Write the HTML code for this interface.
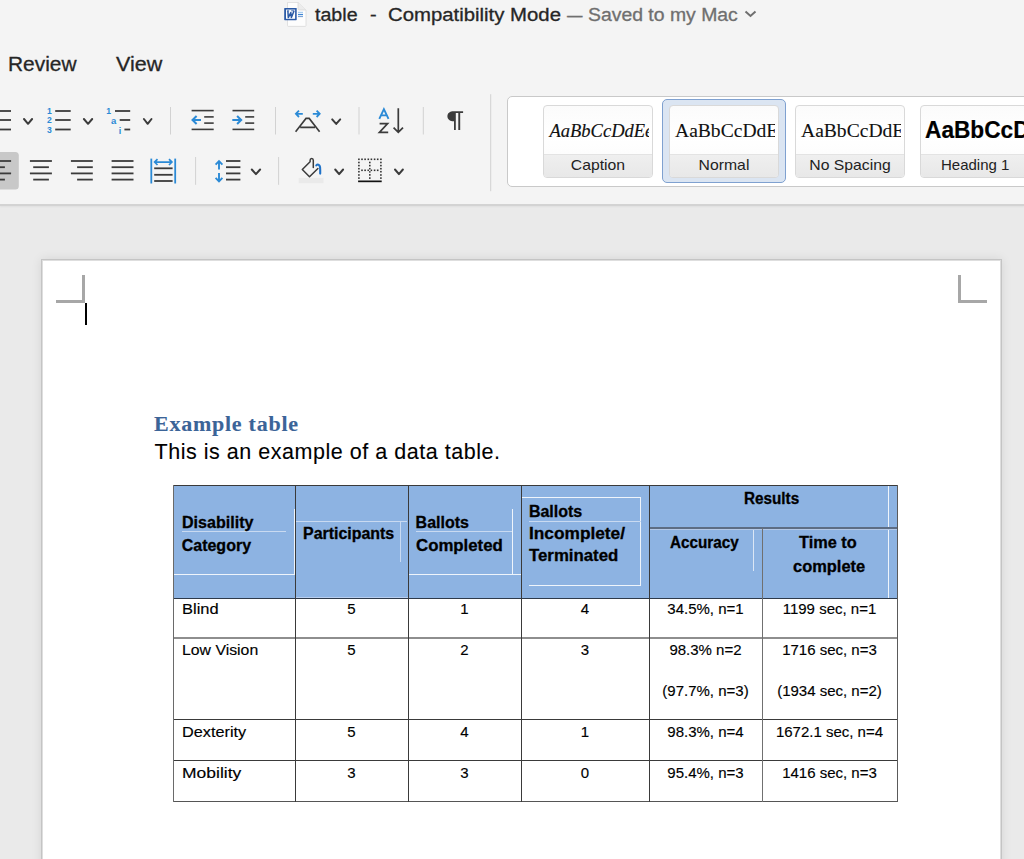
<!DOCTYPE html>
<html><head><meta charset="utf-8">
<style>
*{margin:0;padding:0;box-sizing:border-box}
html,body{width:1024px;height:859px;overflow:hidden;background:#eaeaea;font-family:"Liberation Sans",sans-serif}
.a{position:absolute}
.t{position:absolute;white-space:nowrap;line-height:1;-webkit-text-stroke:0.1px currentColor}
#top{position:absolute;left:0;top:0;width:1024px;height:205px;background:#f4f4f4}
#topline{position:absolute;left:0;top:204px;width:1024px;height:2px;background:#d3d3d3;box-shadow:0 1px 2px rgba(0,0,0,0.05)}
.sep{position:absolute;width:1px;background:#d3d3d3}
.ln{position:absolute;height:2px;background:#3c3c3c}
.bl{background:#2b8ad8}
.chev{position:absolute;width:10px;height:7px}
.tile{position:absolute;top:105px;height:73px;border:1px solid #d9d9d9;border-radius:4px;overflow:hidden;background:linear-gradient(#fbfbfb,#ffffff 40%,#fafafa)}
.tile .bot{position:absolute;left:0;right:0;top:48px;bottom:0;background:linear-gradient(#efefef,#e8e8e8);border-top:1px solid #e3e3e3}
.tile .lab{position:absolute;left:0;right:0;top:49.5px;text-align:center;font-size:15px;color:#222;line-height:18px;transform:scaleX(1.05)}
#page{position:absolute;left:41px;top:259px;width:961px;height:640px;background:#fff;border:1px solid #c4c4c4;box-shadow:0 0 10px rgba(0,0,0,0.09),inset 0 0 0 1px #dedede}
.cm{position:absolute;background:#a7a7a7}
.hl{position:absolute;background:#2a2a2a}
.wl{position:absolute;background:rgba(235,242,252,0.85)}
.hd{position:absolute;font-weight:bold;font-size:16px;color:#000;line-height:23px;white-space:nowrap}
.dt{position:absolute;font-size:15px;color:#000;line-height:20px;white-space:nowrap}
</style></head><body>
<div id="top"></div>
<div id="topline"></div>

<!-- title bar -->
<svg class="a" style="left:276px;top:2px" width="40" height="28" viewBox="0 0 40 28">
<path d="M11.5 0.4 H22 L30 8 V23.6 Q30 24.4 29.2 24.4 H12.3 Q11.5 24.4 11.5 23.6 Z" fill="#fdfdfd" stroke="#d9d9d9" stroke-width="0.8"/>
<path d="M22 0.4 V6.8 Q22 8 23.2 8 H30" fill="#ececec" stroke="#d9d9d9" stroke-width="0.8"/>
<rect x="8.2" y="5.9" width="12.5" height="12.3" rx="0.6" fill="#2b5aa6"/>
<rect x="10" y="7.6" width="9.1" height="9.2" fill="#fff"/>
<path d="M10.9 8.8 H13.2 M15.2 8.8 H18.4" stroke="#2b5aa6" stroke-width="0.9"/>
<path d="M11.9 9 L12.3 15.6 L14.8 10.5 L15.4 15.6 L18 9" fill="none" stroke="#2b5aa6" stroke-width="1.5" stroke-linejoin="round"/>
<rect x="22" y="9.8" width="5" height="1.2" fill="#a9cdf0"/>
<rect x="22" y="11.9" width="5" height="1.2" fill="#3f86d6"/>
<rect x="22" y="13.9" width="5" height="1.2" fill="#7aa3d6"/>
</svg>
<div class="t" style="-webkit-text-stroke:0.3px currentColor;left:314.5px;top:5.5px;font-size:18px;color:#262626;transform:scaleX(1.09);transform-origin:0 0">table</div>
<div class="t" style="-webkit-text-stroke:0.3px currentColor;left:370px;top:5.5px;font-size:18px;color:#262626;transform:scaleX(1.1);transform-origin:0 0">-</div>
<div class="t" style="-webkit-text-stroke:0.3px currentColor;left:388px;top:5.5px;font-size:18px;color:#262626;transform:scaleX(1.13);transform-origin:0 0">Compatibility Mode</div>
<div class="t" style="-webkit-text-stroke:0.3px currentColor;left:566.5px;top:5.5px;font-size:18px;color:#6f6f6f;transform:scaleX(0.86);transform-origin:0 0">—</div>
<div class="t" style="-webkit-text-stroke:0.3px currentColor;left:587.5px;top:5.5px;font-size:18px;color:#6f6f6f;transform:scaleX(1.077);transform-origin:0 0">Saved to my Mac</div>
<svg class="a" style="left:744px;top:10px" width="13" height="8"><path d="M1.5 1.5 L6.5 6 L11.5 1.5" fill="none" stroke="#6f6f6f" stroke-width="2"/></svg>

<!-- tabs -->
<div class="t" style="-webkit-text-stroke:0.3px currentColor;left:8.3px;top:53.6px;font-size:20.7px;color:#262626;transform:scaleX(1.01);transform-origin:0 0">Review</div>
<div class="t" style="-webkit-text-stroke:0.3px currentColor;left:115.5px;top:53.6px;font-size:20.7px;color:#262626;transform:scaleX(1.04);transform-origin:0 0">View</div>

<!-- ribbon row 1 -->
<svg class="a" id="rib" style="left:0;top:0" width="500" height="205" viewBox="0 0 500 205"><line x1="0" y1="111" x2="11" y2="111" stroke="#3b3b3b" stroke-width="1.8"/><line x1="0" y1="120" x2="11" y2="120" stroke="#3b3b3b" stroke-width="1.8"/><line x1="0" y1="129.5" x2="11" y2="129.5" stroke="#3b3b3b" stroke-width="1.8"/><path d="M24.0 119.0 L28.049999999999997 123.8 L32.1 119.0" fill="none" stroke="#3b3b3b" stroke-width="2" stroke-linecap="round" stroke-linejoin="round"/><line x1="55.2" y1="111" x2="70.7" y2="111" stroke="#3b3b3b" stroke-width="1.8"/><text x="49.3" y="114.1" font-size="8.6" font-weight="bold" fill="#2b8ad6" text-anchor="middle" font-family="Liberation Sans">1</text><line x1="55.2" y1="120" x2="70.7" y2="120" stroke="#3b3b3b" stroke-width="1.8"/><text x="49.3" y="123.1" font-size="8.6" font-weight="bold" fill="#2b8ad6" text-anchor="middle" font-family="Liberation Sans">2</text><line x1="55.2" y1="129.5" x2="70.7" y2="129.5" stroke="#3b3b3b" stroke-width="1.8"/><text x="49.3" y="132.6" font-size="8.6" font-weight="bold" fill="#2b8ad6" text-anchor="middle" font-family="Liberation Sans">3</text><path d="M83.89999999999999 119.0 L88.05 123.8 L92.2 119.0" fill="none" stroke="#3b3b3b" stroke-width="2" stroke-linecap="round" stroke-linejoin="round"/><line x1="115" y1="111" x2="130.2" y2="111" stroke="#3b3b3b" stroke-width="1.8"/><line x1="119.7" y1="120" x2="130.2" y2="120" stroke="#3b3b3b" stroke-width="1.8"/><line x1="124.4" y1="129.5" x2="130.2" y2="129.5" stroke="#3b3b3b" stroke-width="1.8"/><text x="108.7" y="114.1" font-size="8.6" font-weight="bold" fill="#2b8ad6" text-anchor="middle" font-family="Liberation Sans">1</text><text x="113.6" y="123.6" font-size="9.5" font-weight="bold" fill="#2b8ad6" text-anchor="middle" font-family="Liberation Sans">a</text><text x="119.9" y="133.5" font-size="9" font-weight="bold" fill="#2b8ad6" text-anchor="middle" font-family="Liberation Sans">i</text><path d="M143.9 119.0 L147.7 123.8 L151.5 119.0" fill="none" stroke="#3b3b3b" stroke-width="2" stroke-linecap="round" stroke-linejoin="round"/><rect x="170.0" y="107" width="1" height="27.5" fill="#d2d2d2"/><line x1="191.6" y1="110.6" x2="213.7" y2="110.6" stroke="#3b3b3b" stroke-width="1.6"/><line x1="191.6" y1="129.4" x2="213.7" y2="129.4" stroke="#3b3b3b" stroke-width="1.6"/><line x1="204.2" y1="116.9" x2="213.7" y2="116.9" stroke="#3b3b3b" stroke-width="1.6"/><line x1="204.2" y1="123.1" x2="213.7" y2="123.1" stroke="#3b3b3b" stroke-width="1.6"/><path d="M192.3 120 H201" stroke="#2b8ad6" stroke-width="2" fill="none"/><path d="M196.6 116 L192.5 120 L196.6 124" stroke="#2b8ad6" stroke-width="2" fill="none"/><line x1="232.5" y1="110.6" x2="254.2" y2="110.6" stroke="#3b3b3b" stroke-width="1.6"/><line x1="232.5" y1="129.4" x2="254.2" y2="129.4" stroke="#3b3b3b" stroke-width="1.6"/><line x1="245.2" y1="116.9" x2="254.2" y2="116.9" stroke="#3b3b3b" stroke-width="1.6"/><line x1="245.2" y1="123.1" x2="254.2" y2="123.1" stroke="#3b3b3b" stroke-width="1.6"/><path d="M232.3 120 H241" stroke="#2b8ad6" stroke-width="2" fill="none"/><path d="M237.1 116 L241.2 120 L237.1 124" stroke="#2b8ad6" stroke-width="2" fill="none"/><rect x="275.0" y="107" width="1" height="27.5" fill="#d2d2d2"/><path d="M295.6 131.8 L306 118.4 H309.2 L319.6 131.8 M300.2 127.4 H315" stroke="#3b3b3b" stroke-width="1.6" fill="none"/><path d="M296 113.8 H302.8 M299 110.6 L295.9 113.8 L299 117" stroke="#2b8ad6" stroke-width="1.8" fill="none"/><path d="M312.8 113.8 H319.6 M316.6 110.6 L319.7 113.8 L316.6 117" stroke="#2b8ad6" stroke-width="1.8" fill="none"/><path d="M332.2 119.39999999999999 L336.2 123.9 L340.2 119.39999999999999" fill="none" stroke="#3b3b3b" stroke-width="2" stroke-linecap="round" stroke-linejoin="round"/><rect x="358.5" y="107" width="1" height="27.5" fill="#d2d2d2"/><path d="M379.3 118.8 L383.9 109.2 L388.5 118.8 M381 115.4 H386.8" stroke="#2b8ad6" stroke-width="1.9" fill="none"/><path d="M379.6 123.6 H387.6 L379.4 132.4 H388.2" stroke="#3b3b3b" stroke-width="1.7" fill="none"/><path d="M398.3 108.3 V132.5 M393.6 127.6 L398.3 132.4 L403 127.6" stroke="#3b3b3b" stroke-width="1.7" fill="none"/><rect x="422.8" y="107" width="1" height="27.5" fill="#d2d2d2"/><path d="M454 111.3 H463.1 V113 H460.2 V130 H458.3 V113 H455.8 V130 H454 V121.3 C449.5 121.3 447.4 119.2 447.4 116.3 C447.4 113.3 449.6 111.3 454 111.3 Z" fill="#3b3b3b"/><rect x="490.2" y="94.2" width="1" height="96.99999999999999" fill="#d2d2d2"/><rect x="-4" y="152.1" width="22.8" height="37.5" rx="3.5" fill="#c8c8c8"/><line x1="0" y1="161" x2="11.1" y2="161" stroke="#3b3b3b" stroke-width="1.8"/><line x1="29.9" y1="161" x2="51.9" y2="161" stroke="#3b3b3b" stroke-width="1.8"/><line x1="70.9" y1="161" x2="92.8" y2="161" stroke="#3b3b3b" stroke-width="1.8"/><line x1="111.6" y1="161" x2="133.5" y2="161" stroke="#3b3b3b" stroke-width="1.8"/><line x1="0" y1="167.2" x2="4.9" y2="167.2" stroke="#3b3b3b" stroke-width="1.8"/><line x1="33.2" y1="167.2" x2="48.9" y2="167.2" stroke="#3b3b3b" stroke-width="1.8"/><line x1="77.1" y1="167.2" x2="92.8" y2="167.2" stroke="#3b3b3b" stroke-width="1.8"/><line x1="111.6" y1="167.2" x2="133.5" y2="167.2" stroke="#3b3b3b" stroke-width="1.8"/><line x1="0" y1="173.4" x2="11.1" y2="173.4" stroke="#3b3b3b" stroke-width="1.8"/><line x1="29.9" y1="173.4" x2="51.9" y2="173.4" stroke="#3b3b3b" stroke-width="1.8"/><line x1="70.9" y1="173.4" x2="92.8" y2="173.4" stroke="#3b3b3b" stroke-width="1.8"/><line x1="111.6" y1="173.4" x2="133.5" y2="173.4" stroke="#3b3b3b" stroke-width="1.8"/><line x1="0" y1="179.6" x2="4.9" y2="179.6" stroke="#3b3b3b" stroke-width="1.8"/><line x1="33.2" y1="179.6" x2="48.9" y2="179.6" stroke="#3b3b3b" stroke-width="1.8"/><line x1="77.1" y1="179.6" x2="92.8" y2="179.6" stroke="#3b3b3b" stroke-width="1.8"/><line x1="111.6" y1="179.6" x2="133.5" y2="179.6" stroke="#3b3b3b" stroke-width="1.8"/><line x1="151.3" y1="158.6" x2="151.3" y2="183.5" stroke="#2b8ad6" stroke-width="1.8"/><line x1="175.2" y1="158.6" x2="175.2" y2="183.5" stroke="#2b8ad6" stroke-width="1.8"/><path d="M154.5 162.1 H172 M157.5 159.2 L154.6 162.1 L157.5 165 M169 159.2 L171.9 162.1 L169 165" stroke="#2b8ad6" stroke-width="1.7" fill="none"/><line x1="154.2" y1="168.3" x2="172.6" y2="168.3" stroke="#3b3b3b" stroke-width="1.8"/><line x1="154.2" y1="174.8" x2="172.6" y2="174.8" stroke="#3b3b3b" stroke-width="1.8"/><line x1="154.2" y1="181" x2="172.6" y2="181" stroke="#3b3b3b" stroke-width="1.8"/><rect x="195.1" y="157" width="1" height="27.80000000000001" fill="#d2d2d2"/><path d="M219 169.6 V161.2 M215.6 164.6 L219 161.1 L222.4 164.6 M219 173 V181.2 M215.6 177.8 L219 181.3 L222.4 177.8" stroke="#2b8ad6" stroke-width="1.9" fill="none"/><line x1="226" y1="161" x2="240.4" y2="161" stroke="#3b3b3b" stroke-width="1.8"/><line x1="226" y1="167.2" x2="240.4" y2="167.2" stroke="#3b3b3b" stroke-width="1.8"/><line x1="226" y1="173.4" x2="240.4" y2="173.4" stroke="#3b3b3b" stroke-width="1.8"/><line x1="226" y1="179.6" x2="240.4" y2="179.6" stroke="#3b3b3b" stroke-width="1.8"/><path d="M251.8 169.5 L255.95 174.1 L260.09999999999997 169.5" fill="none" stroke="#3b3b3b" stroke-width="2" stroke-linecap="round" stroke-linejoin="round"/><rect x="278.1" y="157" width="1" height="27.80000000000001" fill="#d2d2d2"/><rect x="298.7" y="177.9" width="24.8" height="5.3" fill="#eaeaea"/><path d="M313.3 167.6 V160.3 Q313.3 158.5 311.7 158.5 Q310.1 158.5 310.1 160.3 V161.8 L302.3 169.5 L309.5 176.7 L317.9 168.5" stroke="#3b3b3b" stroke-width="1.5" fill="none" stroke-linejoin="round" stroke-linecap="round"/><path d="M316.3 165.4 Q317.9 163.4 319.5 165.6 Q320.4 167 320.2 170 V173.6" stroke="#1f72c8" stroke-width="2.1" fill="none" stroke-linecap="round"/><path d="M335.2 169.5 L339.15 174.1 L343.09999999999997 169.5" fill="none" stroke="#3b3b3b" stroke-width="2" stroke-linecap="round" stroke-linejoin="round"/><rect x="358.10" y="158.50" width="1.6" height="1.6" fill="#333"/><rect x="358.10" y="161.70" width="1.6" height="1.6" fill="#333"/><rect x="358.10" y="164.80" width="1.6" height="1.6" fill="#333"/><rect x="358.10" y="167.90" width="1.6" height="1.6" fill="#333"/><rect x="358.10" y="170.90" width="1.6" height="1.6" fill="#333"/><rect x="358.10" y="174.20" width="1.6" height="1.6" fill="#333"/><rect x="358.10" y="177.30" width="1.6" height="1.6" fill="#333"/><rect x="361.20" y="158.50" width="1.6" height="1.6" fill="#333"/><rect x="361.20" y="169.50" width="1.6" height="1.6" fill="#333"/><rect x="364.30" y="158.50" width="1.6" height="1.6" fill="#333"/><rect x="364.30" y="169.50" width="1.6" height="1.6" fill="#333"/><rect x="367.50" y="158.50" width="1.6" height="1.6" fill="#333"/><rect x="369.00" y="161.70" width="1.6" height="1.6" fill="#333"/><rect x="369.00" y="164.80" width="1.6" height="1.6" fill="#333"/><rect x="369.00" y="174.10" width="1.6" height="1.6" fill="#333"/><rect x="369.00" y="177.30" width="1.6" height="1.6" fill="#333"/><rect x="370.60" y="158.50" width="1.6" height="1.6" fill="#333"/><rect x="373.80" y="158.50" width="1.6" height="1.6" fill="#333"/><rect x="373.80" y="169.50" width="1.6" height="1.6" fill="#333"/><rect x="376.90" y="158.50" width="1.6" height="1.6" fill="#333"/><rect x="376.90" y="169.50" width="1.6" height="1.6" fill="#333"/><rect x="380.10" y="158.50" width="1.6" height="1.6" fill="#333"/><rect x="380.10" y="161.70" width="1.6" height="1.6" fill="#333"/><rect x="380.10" y="164.80" width="1.6" height="1.6" fill="#333"/><rect x="380.10" y="167.90" width="1.6" height="1.6" fill="#333"/><rect x="380.10" y="170.90" width="1.6" height="1.6" fill="#333"/><rect x="380.10" y="174.20" width="1.6" height="1.6" fill="#333"/><rect x="380.10" y="177.30" width="1.6" height="1.6" fill="#333"/><rect x="367.45" y="169.55" width="1.5" height="1.5" fill="#333"/><rect x="370.65" y="169.55" width="1.5" height="1.5" fill="#333"/><rect x="369.05" y="167.95" width="1.5" height="1.5" fill="#333"/><rect x="369.05" y="171.15" width="1.5" height="1.5" fill="#333"/><rect x="358.1" y="180.5" width="23.6" height="1.7" fill="#111"/><path d="M395.0 169.5 L398.95 174.1 L402.9 169.5" fill="none" stroke="#3b3b3b" stroke-width="2" stroke-linecap="round" stroke-linejoin="round"/></svg>

<!-- style gallery -->
<div class="a" style="left:507px;top:96px;width:530px;height:91px;background:#fff;border:1px solid #c9c9c9;border-radius:5px"></div>
<div class="tile" style="left:543px;width:110px"><div class="a" style="left:0;top:0;width:105px;height:45px;overflow:hidden"><div class="t" style="left:5.5px;top:16px;font-family:'Liberation Serif',serif;font-style:italic;font-size:18.5px;color:#111;-webkit-text-stroke:0.15px #111;transform:scaleX(1.0);transform-origin:0 0">AaBbCcDdEe</div></div><div class="bot"></div><div class="lab">Caption</div></div>
<div class="a" style="left:662px;top:99px;width:124px;height:84px;border:1.5px solid #7fa1d0;border-radius:5px;background:#dbe5f2"></div>
<div class="tile" style="left:669px;width:110px"><div class="a" style="left:0;top:0;width:104.5px;height:45px;overflow:hidden"><div class="t" style="left:4.5px;top:15.3px;font-family:'Liberation Serif',serif;font-size:19.3px;color:#111;-webkit-text-stroke:0.1px #111;transform:scaleX(1.015);transform-origin:0 0">AaBbCcDdE</div></div><div class="bot"></div><div class="lab">Normal</div></div>
<div class="tile" style="left:795px;width:110px"><div class="a" style="left:0;top:0;width:104.5px;height:45px;overflow:hidden"><div class="t" style="left:4.5px;top:15.3px;font-family:'Liberation Serif',serif;font-size:19.3px;color:#111;-webkit-text-stroke:0.1px #111;transform:scaleX(1.015);transform-origin:0 0">AaBbCcDdE</div></div><div class="bot"></div><div class="lab">No Spacing</div></div>
<div class="tile" style="left:920px;width:140px"><div class="t" style="left:3.5px;top:12px;font-weight:bold;font-size:24px;color:#000;-webkit-text-stroke:0.2px #000;transform:scaleX(0.945);transform-origin:0 0">AaBbCcDd</div><div class="bot"></div><div class="lab" style="left:0;right:auto;width:140px;padding-left:20px;text-align:left;transform:none">Heading 1</div></div>

<!-- page -->
<div id="page"></div>
<div class="cm" style="left:82px;top:275px;width:3px;height:28px"></div>
<div class="cm" style="left:56px;top:300px;width:29px;height:3px"></div>
<div class="cm" style="left:958px;top:275px;width:3px;height:28px"></div>
<div class="cm" style="left:958px;top:300px;width:29px;height:3px"></div>
<div class="a" style="left:85px;top:303px;width:1.6px;height:22px;background:#000"></div>

<div class="t" style="left:154px;top:413px;font-family:'Liberation Serif',serif;font-weight:bold;font-size:22px;letter-spacing:0.75px;color:#3b6498">Example table</div>
<div class="t" style="left:154.5px;top:442px;font-size:21.5px;letter-spacing:0.53px;color:#000">This is an example of a data table.</div>

<div id="tbl"><div class="a" style="left:173px;top:485px;width:724px;height:113px;background:#8db3e2"></div><div class="a" style="left:182px;top:531px;width:104px;height:1px;background:#c9daf1"></div><div class="a" style="left:173px;top:574px;width:121px;height:1px;background:#eef4fb"></div><div class="a" style="left:294px;top:509px;width:1px;height:66px;background:#eef4fb"></div><div class="a" style="left:296px;top:521px;width:111px;height:1px;background:#c9daf1"></div><div class="a" style="left:400px;top:521px;width:1px;height:41px;background:#c9daf1"></div><div class="a" style="left:296px;top:597px;width:112px;height:1px;background:#b9cff0"></div><div class="a" style="left:416px;top:531px;width:96px;height:1px;background:#c9daf1"></div><div class="a" style="left:409px;top:574px;width:112px;height:1px;background:#eef4fb"></div><div class="a" style="left:512px;top:509px;width:1px;height:66px;background:#eef4fb"></div><div class="a" style="left:522px;top:497px;width:119px;height:1px;background:#eef4fb"></div><div class="a" style="left:640px;top:497px;width:1px;height:89px;background:#eef4fb"></div><div class="a" style="left:529px;top:585px;width:112px;height:1px;background:#eef4fb"></div><div class="a" style="left:529px;top:521px;width:112px;height:1px;background:#c9daf1"></div><div class="a" style="left:888px;top:486px;width:1px;height:112px;background:#eef4fb"></div><div class="a" style="left:753px;top:529px;width:1px;height:42px;background:#dbe6f5"></div><div class="a" style="left:173px;top:485px;width:725px;height:1px;background:#3a3a3a"></div><div class="a" style="left:173px;top:598px;width:725px;height:1px;background:#2e3a4a"></div><div class="a" style="left:173px;top:637px;width:725px;height:2px;background:#8e8e8e"></div><div class="a" style="left:173px;top:719px;width:725px;height:1px;background:#3a3a3a"></div><div class="a" style="left:173px;top:760px;width:725px;height:1px;background:#3a3a3a"></div><div class="a" style="left:173px;top:801px;width:725px;height:1px;background:#555"></div><div class="a" style="left:649px;top:527px;width:248px;height:2px;background:#5d6d84"></div><div class="a" style="left:650px;top:529px;width:247px;height:1px;background:#b4c9e8"></div><div class="a" style="left:173px;top:485px;width:1px;height:317px;background:#6a6a6a"></div><div class="a" style="left:295px;top:485px;width:1px;height:317px;background:#3a3a3a"></div><div class="a" style="left:408px;top:485px;width:1px;height:317px;background:#3a3a3a"></div><div class="a" style="left:521px;top:485px;width:1px;height:317px;background:#3a3a3a"></div><div class="a" style="left:649px;top:485px;width:1px;height:317px;background:#3a3a3a"></div><div class="a" style="left:897px;top:485px;width:1px;height:317px;background:#5a5a5a"></div><div class="a" style="left:762px;top:528px;width:1px;height:274px;background:#707070"></div><div class="t" style="left:181.70px;top:515.06px;font-size:16px;font-weight:bold;-webkit-text-stroke:0.3px #000;color:#000;transform:scaleX(1.0042);transform-origin:0 0;">Disability</div><div class="t" style="left:181.70px;top:538.26px;font-size:16px;font-weight:bold;-webkit-text-stroke:0.3px #000;color:#000;">Category</div><div class="t" style="left:302.80px;top:525.76px;font-size:16px;font-weight:bold;-webkit-text-stroke:0.3px #000;color:#000;transform:scaleX(0.9961);transform-origin:0 0;">Participants</div><div class="t" style="left:415.60px;top:515.06px;font-size:16px;font-weight:bold;-webkit-text-stroke:0.3px #000;color:#000;">Ballots</div><div class="t" style="left:415.60px;top:538.26px;font-size:16px;font-weight:bold;-webkit-text-stroke:0.3px #000;color:#000;transform:scaleX(1.0500);transform-origin:0 0;">Completed</div><div class="t" style="left:528.90px;top:503.56px;font-size:16px;font-weight:bold;-webkit-text-stroke:0.3px #000;color:#000;">Ballots</div><div class="t" style="left:528.90px;top:526.06px;font-size:16px;font-weight:bold;-webkit-text-stroke:0.3px #000;color:#000;transform:scaleX(1.0800);transform-origin:0 0;">Incomplete/</div><div class="t" style="left:528.90px;top:548.46px;font-size:16px;font-weight:bold;-webkit-text-stroke:0.3px #000;color:#000;transform:scaleX(1.0500);transform-origin:0 0;">Terminated</div><div class="t" style="left:743.90px;top:491.36px;font-size:16px;font-weight:bold;-webkit-text-stroke:0.3px #000;color:#000;transform:scaleX(0.9543);transform-origin:0 0;">Results</div><div class="t" style="left:669.70px;top:535.16px;font-size:16px;font-weight:bold;-webkit-text-stroke:0.3px #000;color:#000;transform:scaleX(0.9541);transform-origin:0 0;">Accuracy</div><div class="t" style="left:799.00px;top:535.16px;font-size:16px;font-weight:bold;-webkit-text-stroke:0.3px #000;color:#000;transform:scaleX(1.0184);transform-origin:0 0;">Time to</div><div class="t" style="left:792.60px;top:559.46px;font-size:16px;font-weight:bold;-webkit-text-stroke:0.3px #000;color:#000;transform:scaleX(1.0271);transform-origin:0 0;">complete</div><div class="t" style="left:181.80px;top:601.30px;font-size:15px;-webkit-text-stroke:0.15px #000;color:#000;transform:scaleX(1.0970);transform-origin:0 0;">Blind</div><div class="t" style="left:347.33px;top:601.30px;font-size:15px;-webkit-text-stroke:0.15px #000;color:#000;">5</div><div class="t" style="left:460.33px;top:601.30px;font-size:15px;-webkit-text-stroke:0.15px #000;color:#000;">1</div><div class="t" style="left:580.83px;top:601.30px;font-size:15px;-webkit-text-stroke:0.15px #000;color:#000;">4</div><div class="t" style="left:667.33px;top:601.30px;font-size:15px;-webkit-text-stroke:0.15px #000;color:#000;">34.5%, n=1</div><div class="t" style="left:782.71px;top:601.30px;font-size:15px;-webkit-text-stroke:0.15px #000;color:#000;">1199 sec, n=1</div><div class="t" style="left:181.80px;top:641.90px;font-size:15px;-webkit-text-stroke:0.15px #000;color:#000;transform:scaleX(1.0540);transform-origin:0 0;">Low Vision</div><div class="t" style="left:347.33px;top:641.90px;font-size:15px;-webkit-text-stroke:0.15px #000;color:#000;">5</div><div class="t" style="left:460.33px;top:641.90px;font-size:15px;-webkit-text-stroke:0.15px #000;color:#000;">2</div><div class="t" style="left:580.83px;top:641.90px;font-size:15px;-webkit-text-stroke:0.15px #000;color:#000;">3</div><div class="t" style="left:669.41px;top:641.90px;font-size:15px;-webkit-text-stroke:0.15px #000;color:#000;">98.3% n=2</div><div class="t" style="left:782.16px;top:641.90px;font-size:15px;-webkit-text-stroke:0.15px #000;color:#000;">1716 sec, n=3</div><div class="t" style="left:662.33px;top:682.80px;font-size:15px;-webkit-text-stroke:0.15px #000;color:#000;">(97.7%, n=3)</div><div class="t" style="left:777.16px;top:682.80px;font-size:15px;-webkit-text-stroke:0.15px #000;color:#000;">(1934 sec, n=2)</div><div class="t" style="left:181.80px;top:723.70px;font-size:15px;-webkit-text-stroke:0.15px #000;color:#000;transform:scaleX(1.0840);transform-origin:0 0;">Dexterity</div><div class="t" style="left:347.33px;top:723.70px;font-size:15px;-webkit-text-stroke:0.15px #000;color:#000;">5</div><div class="t" style="left:460.33px;top:723.70px;font-size:15px;-webkit-text-stroke:0.15px #000;color:#000;">4</div><div class="t" style="left:580.83px;top:723.70px;font-size:15px;-webkit-text-stroke:0.15px #000;color:#000;">1</div><div class="t" style="left:667.33px;top:723.70px;font-size:15px;-webkit-text-stroke:0.15px #000;color:#000;">98.3%, n=4</div><div class="t" style="left:775.90px;top:723.70px;font-size:15px;-webkit-text-stroke:0.15px #000;color:#000;">1672.1 sec, n=4</div><div class="t" style="left:181.80px;top:764.70px;font-size:15px;-webkit-text-stroke:0.15px #000;color:#000;transform:scaleX(1.1650);transform-origin:0 0;">Mobility</div><div class="t" style="left:347.33px;top:764.70px;font-size:15px;-webkit-text-stroke:0.15px #000;color:#000;">3</div><div class="t" style="left:460.33px;top:764.70px;font-size:15px;-webkit-text-stroke:0.15px #000;color:#000;">3</div><div class="t" style="left:580.83px;top:764.70px;font-size:15px;-webkit-text-stroke:0.15px #000;color:#000;">0</div><div class="t" style="left:667.33px;top:764.70px;font-size:15px;-webkit-text-stroke:0.15px #000;color:#000;">95.4%, n=3</div><div class="t" style="left:782.16px;top:764.70px;font-size:15px;-webkit-text-stroke:0.15px #000;color:#000;">1416 sec, n=3</div></div><!--/tbl-->
</body></html>
